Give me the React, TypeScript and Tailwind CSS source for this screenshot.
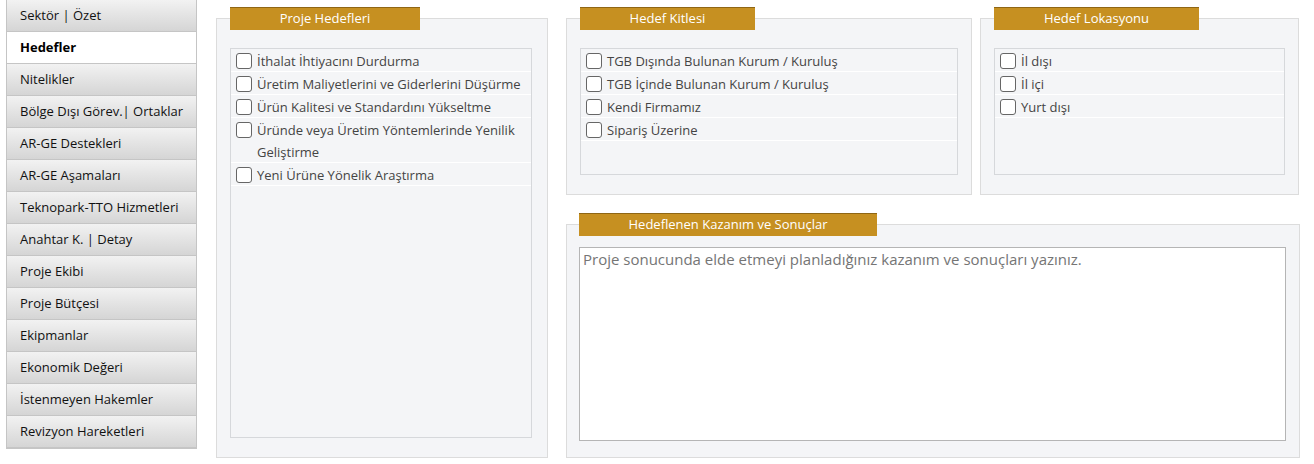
import React from "react";

const menu = [
  "Sektör | Özet",
  "Hedefler",
  "Nitelikler",
  "Bölge Dışı Görev.| Ortaklar",
  "AR-GE Destekleri",
  "AR-GE Aşamaları",
  "Teknopark-TTO Hizmetleri",
  "Anahtar K. | Detay",
  "Proje Ekibi",
  "Proje Bütçesi",
  "Ekipmanlar",
  "Ekonomik Değeri",
  "İstenmeyen Hakemler",
  "Revizyon Hareketleri",
];

const projeHedefleri = [
  "İthalat İhtiyacını Durdurma",
  "Üretim Maliyetlerini ve Giderlerini Düşürme",
  "Ürün Kalitesi ve Standardını Yükseltme",
  "Üründe veya Üretim Yöntemlerinde Yenilik Geliştirme",
  "Yeni Ürüne Yönelik Araştırma",
];

const hedefKitlesi = [
  "TGB Dışında Bulunan Kurum / Kuruluş",
  "TGB İçinde Bulunan Kurum / Kuruluş",
  "Kendi Firmamız",
  "Sipariş Üzerine",
];

const hedefLokasyonu = ["İl dışı", "İl içi", "Yurt dışı"];

function Header({ title, width }: { title: string; width: string }) {
  return (
    <div
      className={`relative z-10 ml-[14px] flex h-[23px] items-center justify-center border-t border-[#8f6614] bg-[#c69021] text-[13px] text-white ${width}`}
    >
      {title}
    </div>
  );
}

function CheckList({ items }: { items: string[] }) {
  return (
    <div className="h-full border border-[#d6d8db] bg-[#f4f5f7]">
      {items.map((item) => (
        <label
          key={item}
          className="flex items-start gap-[5px] border-b border-white pl-[5px] pr-2 text-[13px] leading-[22px] text-[#444]"
        >
          <span className="mt-[4px] h-[16px] w-[16px] shrink-0 rounded-[3px] border border-[#666] bg-white" />
          <span className="translate-y-[1px]">{item}</span>
        </label>
      ))}
    </div>
  );
}

export default function App() {
  return (
    <div
      className="flex h-[464px] w-[1314px] bg-white"
      style={{ fontFamily: '"Open Sans", "Noto Sans", sans-serif' }}
    >
      {/* Sidebar */}
      <div className="ml-[6px] w-[191px] self-start border-x border-b border-[#c5c5c5]">
        {menu.map((m) => (
          <div
            key={m}
            className={
              m === "Hedefler"
                ? "flex h-[32px] items-center border-b border-[#c5c5c5] bg-white pl-[13px] text-[13px] font-bold text-black"
                : "flex h-[32px] items-center border-b border-[#c5c5c5] bg-gradient-to-b from-[#f2f2f2] to-[#d5d5d5] pl-[13px] text-[13px] text-[#111]"
            }
          >
            {m}
          </div>
        ))}
      </div>

      {/* Proje Hedefleri */}
      <div className="ml-[19px] mt-[7px] flex h-[451px] w-[332px] flex-col">
        <Header title="Proje Hedefleri" width="w-[190px]" />
        <div className="-mt-[12px] flex-1 border border-[#dcdcdc] bg-[#f4f5f7] pb-[19px] pl-[13px] pr-[15px] pt-[29px]">
          <CheckList items={projeHedefleri} />
        </div>
      </div>

      {/* Right column */}
      <div className="ml-[18px] mt-[7px] flex w-[734px] flex-col">
        <div className="flex gap-[8px]">
          <div className="flex w-[406px] flex-col">
            <Header title="Hedef Kitlesi" width="w-[175px]" />
            <div className="-mt-[12px] h-[177px] border border-[#dcdcdc] bg-[#f4f5f7] pb-[19px] pl-[13px] pr-[13px] pt-[29px]">
              <CheckList items={hedefKitlesi} />
            </div>
          </div>
          <div className="flex w-[319px] flex-col">
            <Header title="Hedef Lokasyonu" width="w-[205px]" />
            <div className="-mt-[12px] h-[177px] border border-[#dcdcdc] bg-[#f4f5f7] pb-[19px] pl-[13px] pr-[13px] pt-[29px]">
              <CheckList items={hedefLokasyonu} />
            </div>
          </div>
        </div>

        <div className="mt-[18px] flex flex-1 flex-col pb-[6px]">
          <div className="relative z-10 ml-[13px] flex h-[23px] w-[298px] items-center justify-center border-t border-[#8f6614] bg-[#c69021] text-[13px] text-white">
            Hedeflenen Kazanım ve Sonuçlar
          </div>
          <div className="-mt-[12px] flex flex-1 flex-col border border-[#dcdcdc] bg-[#f4f5f7] pb-[16px] pl-[12px] pr-[13px] pt-[22px]">
            <textarea
              className="flex-1 resize-none border border-[#b5b5b5] bg-white px-[3px] py-[0px] text-[15px] text-[#555] outline-none placeholder:text-[#757575]"
              placeholder="Proje sonucunda elde etmeyi planladığınız kazanım ve sonuçları yazınız."
              style={{ fontFamily: '"Open Sans", sans-serif' }}
            />
          </div>
        </div>
      </div>
    </div>
  );
}
